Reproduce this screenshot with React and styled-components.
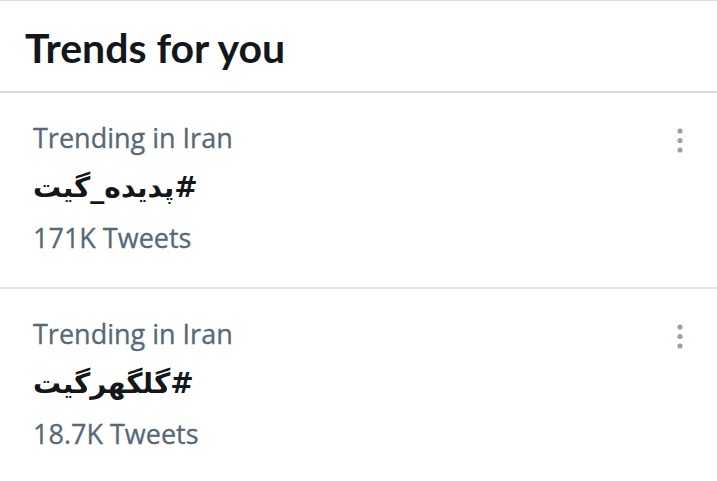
import React from "react";
import styled, { createGlobalStyle } from "styled-components";

const GlobalStyle = createGlobalStyle`
  body {
    margin: 0;
    background: #ffffff;
    font-family: "Open Sans", "DejaVu Sans", sans-serif;
  }
`;

const trends = [
  { place: "Trending in Iran", tag: "#پدیده_گیت", count: "171K Tweets" },
  { place: "Trending in Iran", tag: "#گلگهرگیت", count: "18.7K Tweets" },
];

function MoreIcon() {
  return (
    <svg width="10" height="28" viewBox="0 0 10 28">
      <circle cx="5" cy="4" r="2.6" fill="#9aa1a7" />
      <circle cx="5" cy="13.5" r="2.6" fill="#9aa1a7" />
      <circle cx="5" cy="23" r="2.6" fill="#9aa1a7" />
    </svg>
  );
}

export default function App() {
  return (
    <Panel>
      <GlobalStyle />
      <Header>
        <Title>Trends for you</Title>
      </Header>
      {trends.map((t, i) => (
        <Item key={i}>
          <Info>
            <Place>{t.place}</Place>
            <Tag dir="rtl">{t.tag}</Tag>
            <Count>{t.count}</Count>
          </Info>
          <More>
            <MoreIcon />
          </More>
        </Item>
      ))}
    </Panel>
  );
}

const Panel = styled.div`
  width: 717px;
  min-height: 481px;
  border-top: 1px solid #dcdcdc;
  box-sizing: border-box;
`;

const Header = styled.div`
  height: 92px;
  padding-left: 25px;
  padding-top: 2px;
  display: flex;
  align-items: center;
  border-bottom: 2px solid #d3dde3;
  box-sizing: border-box;
`;

const Title = styled.h2`
  margin: 0;
  font-family: Lato, "Open Sans", sans-serif;
  font-size: 41px;
  font-weight: 700;
  color: #14171a;
`;

const Item = styled.div`
  display: flex;
  justify-content: space-between;
  align-items: flex-start;
  padding: 20px 32px 24px 33px;
  border-bottom: 2px solid #e3e3e3;
`;

const Info = styled.div`
  display: flex;
  flex-direction: column;
  align-items: flex-start;
`;

const Place = styled.div`
  font-size: 27px;
  line-height: 50px;
  color: #586875;
  -webkit-text-stroke: 0.3px #586875;
`;

const Tag = styled.div`
  font-family: "DejaVu Sans", sans-serif;
  font-size: 28px;
  font-weight: 700;
  line-height: 50px;
  color: #14171a;
`;

const Count = styled(Place)``;

const More = styled.div`
  padding-top: 14px;
  display: flex;
`;
